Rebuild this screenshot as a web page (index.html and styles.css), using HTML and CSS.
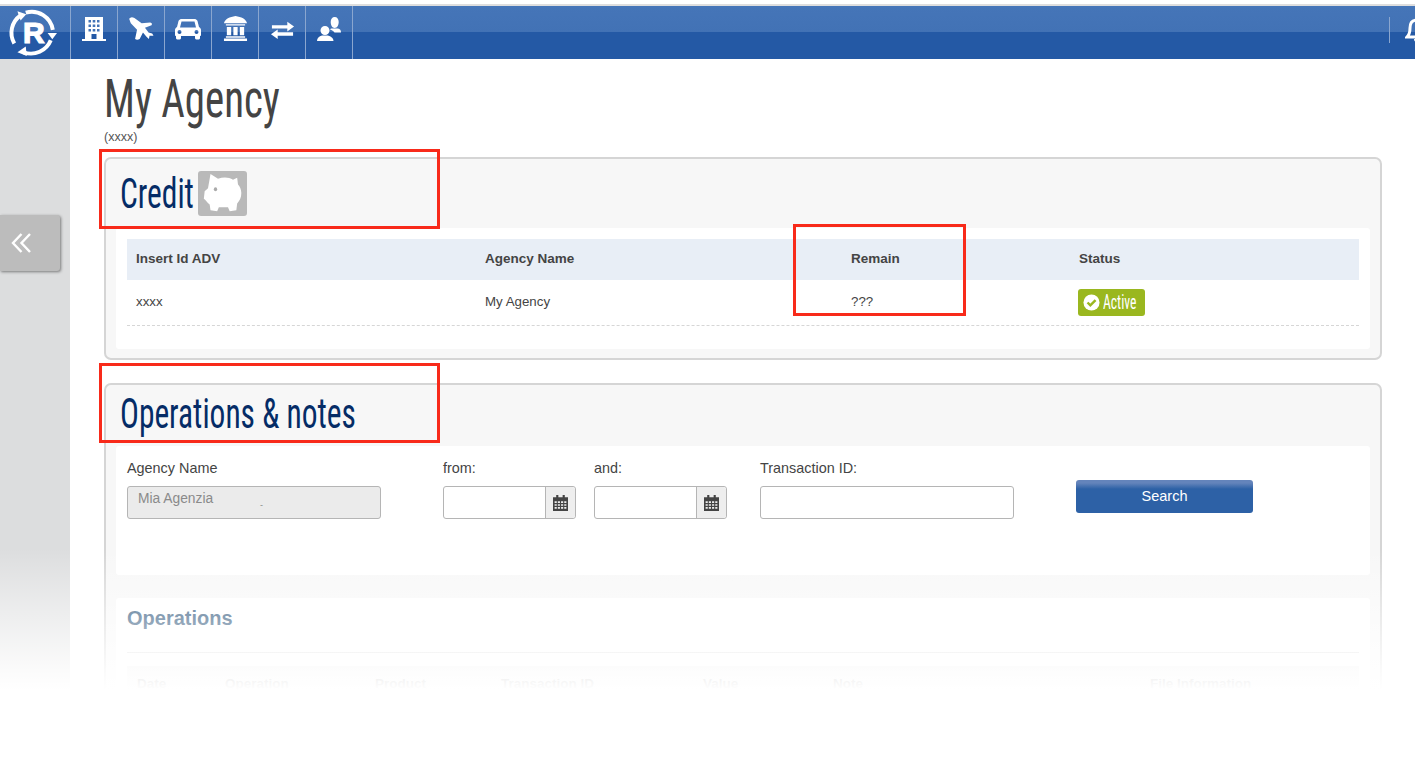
FILE: index.html
```html
<!DOCTYPE html>
<html lang="en">
<head>
<meta charset="utf-8">
<title>My Agency</title>
<link rel="stylesheet" href="styles.css">
</head>
<body>
<div class="page">
  <header class="topbar">
    <div class="logo">
      <svg class="logo-ring" viewBox="0 0 48 48" width="50" height="50">
        <g fill="none" stroke="#fff" stroke-width="3.800">
          <path d="M7 34A20.500 20.500 0 0 1 13 7"/>
          <path d="M18 4.500A20.500 20.500 0 0 1 44 21"/>
          <path d="M42 31A20.500 20.500 0 0 1 16 42.500"/>
        </g>
        <g fill="#fff">
          <path d="M10 3l8.500 3-5.500 6z"/>
          <path d="M39 24h9l-4.500 6z"/>
          <path d="M18 37l1 9-9-3.500z"/>
        </g>
      </svg>
      <span class="logo-r">R</span>
    </div>
    <nav class="nav">
      <a class="nav-item"><svg viewBox="0 0 24 24" width="24" height="24"><path fill="#fff" fill-rule="evenodd" d="M3 0h18v22h3v2H0v-2h3zM6.500 3v2.500h2.500V3zm4.200 0v2.500h2.600V3zm4.300 0v2.500h2.500V3zM6.500 7.500V10h2.500V7.500zm4.200 0V10h2.600V7.500zm4.300 0V10h2.500V7.500zM6.500 12v2.500h2.500V12zm4.200 0v2.500h2.600V12zm4.300 0v2.500h2.500V12zM9.500 17v5h5v-5z"/></svg></a>
      <a class="nav-item"><svg viewBox="385 50 78 76" width="26" height="25"><path fill="#fff" d="M388 58Q394 50 404 56L426 72 452 70Q460 72 456 78L436 86 447 100 458 103 462 110 450 110 448 120 440 112 430 100 420 120Q412 124 406 120L412 92 393 72Z"/></svg></a>
      <a class="nav-item"><svg viewBox="0 0 26 24" width="26" height="24"><path fill="#fff" fill-rule="evenodd" d="M6 2h14c1 0 2 1 2.500 2L24 10c1 .5 2 1.500 2 3v5c0 1-1 1-1 1v2c0 1-1 1.500-2 1.500h-1c-1 0-2-.5-2-1.500v-2H6v2c0 1-1 1.500-2 1.500H3c-1 0-2-.5-2-1.500v-2s-1 0-1-1v-5c0-1.500 1-2.500 2-3l1.500-6C4 3 5 2 6 2zm.5 2.500L5 10.500h16l-1.500-6zM4.500 13a2 2 0 1 0 0 4 2 2 0 0 0 0-4zm17 0a2 2 0 1 0 0 4 2 2 0 0 0 0-4z"/></svg></a>
      <a class="nav-item"><svg viewBox="0 0 26 26" width="25" height="25"><path fill="#fff" d="M13 0C19 1 24 3 25 7.500H1C2 3 7 1 13 0zM3 8.500h20v1.500H3zM4 11.500h4.500v8.500H4zM10.800 11.500h4.400v8.500h-4.400zM17.500 11.500H22v8.500h-4.500zM3 21h20v1.500H3zM1 23.500h24v2.500H1z"/></svg></a>
      <a class="nav-item"><svg viewBox="0 -6 26 28" width="25" height="27"><path fill="#fff" d="M18 1l7 5-7 5V8H2V4.500h16zM8 9v3h16v3.500H8V19l-7-5z"/></svg></a>
      <a class="nav-item"><svg viewBox="0 0 24 24" width="24" height="24"><g fill="#fff"><path d="M8 9c2.500 0 4.500 2 4.500 4.500S10.500 18 8 18s-4.500-2-4.500-4.500S5.500 9 8 9zM0 24c0-3 2-4.500 5-5.500h6c3 1 5.500 2.500 5.500 5.500z"/><path d="M17.700 0c2.500 0 4 2 4 5s-1.500 6-4 6-4-3-4-6 1.500-5 4-5zM14 11.500h7c2 .5 3 1.500 3 4h-6.500c-1-1.500-2.500-2.500-4.500-3z"/></g></svg></a>
    </nav>
    <div class="topbar-right">
      <span class="top-sep"></span>
      <svg class="bell" viewBox="0 0 24 26" width="24" height="26"><path fill="none" stroke="#fff" stroke-width="3" d="M12 3c5 0 7 3 7 8 0 5 1 7 3 9H2c2-2 3-4 3-9 0-5 2-8 7-8z"/><path fill="#fff" d="M9 22h6c0 2-1 3-3 3s-3-1-3-3zM10.500 0h3v3h-3z"/></svg>
    </div>
  </header>

  <div class="body">
    <aside class="sidebar">
      <button class="collapse" type="button" aria-label="Collapse"><svg viewBox="0 0 20 20" width="20" height="20"><path fill="none" stroke="#fff" stroke-width="2.400" d="M10.500 1L2 10l8.500 9M19 1l-8.500 9 8.500 9"/></svg></button>
    </aside>
    <main class="main">
      <h1 class="title"><span class="narrow">My Agency</span></h1>
      <p class="subtitle">(xxxx)</p>

      <section class="panel panel-credit">
        <h2 class="panel-title"><span class="narrow narrow-credit">Credit</span>
          <span class="piggy">
            <svg viewBox="0 0 48 44" width="40" height="42" preserveAspectRatio="none"><path fill="#fff" d="M9 1l9 5c6-2 13-2 18 1l5-2 1 7c2 2 4 5 4 9 0 5-2 8-5 11l-1 7-8 1-2-4H19l-2 4-8-1-1-6c-3-2-5-5-7-6l1-8 4-3z"/><circle cx="15" cy="17" r="2" fill="#aaa"/></svg>
          </span>
        </h2>
        <div class="card">
          <div class="credit-table">
            <div class="credit-row credit-head">
              <span>Insert Id ADV</span><span>Agency Name</span><span>Remain</span><span>Status</span>
            </div>
            <div class="credit-row credit-data">
              <span>xxxx</span><span>My Agency</span><span>???</span>
              <span><span class="badge"><svg viewBox="0 0 18 18" width="17" height="17"><circle cx="9" cy="9" r="8.500" fill="#fff"/><path fill="none" stroke="#9ab71f" stroke-width="2.600" d="M4.800 9l3 3 5.500-5.500"/></svg><span class="badge-text">Active</span></span></span>
            </div>
          </div>
        </div>
      </section>

      <section class="panel panel-ops">
        <h2 class="panel-title"><span class="narrow">Operations &amp; notes</span></h2>
        <div class="card card-form">
          <div class="field field-agency">
            <label class="label">Agency Name</label>
            <div class="input input-disabled">Mia Agenzia<span class="tick">-</span></div>
          </div>
          <div class="field field-date">
            <label class="label">from:</label>
            <div class="input input-date"><span class="date-box"></span><span class="addon"><svg viewBox="0 0 14 14" width="15" height="16" preserveAspectRatio="none"><path fill="#444" fill-rule="evenodd" d="M3 0h2v2h4V0h2v2h3v12H0V2h3zM1.500 5.500v1.500h2V5.500zm3 0v1.500h2V5.500zm3 0v1.500h2V5.500zm3 0v1.500h2V5.500zm-9 2.500v1.500h2V8zm3 0v1.500h2V8zm3 0v1.500h2V8zm3 0v1.500h2V8zm-9 2.500V12h2v-1.500zm3 0V12h2v-1.500zm3 0V12h2v-1.500zm3 0V12h2v-1.500z"/></svg></span></div>
          </div>
          <div class="field field-date field-and">
            <label class="label">and:</label>
            <div class="input input-date"><span class="date-box"></span><span class="addon"><svg viewBox="0 0 14 14" width="15" height="16" preserveAspectRatio="none"><path fill="#444" fill-rule="evenodd" d="M3 0h2v2h4V0h2v2h3v12H0V2h3zM1.500 5.500v1.500h2V5.500zm3 0v1.500h2V5.500zm3 0v1.500h2V5.500zm3 0v1.500h2V5.500zm-9 2.500v1.500h2V8zm3 0v1.500h2V8zm3 0v1.500h2V8zm3 0v1.500h2V8zm-9 2.500V12h2v-1.500zm3 0V12h2v-1.500zm3 0V12h2v-1.500zm3 0V12h2v-1.500z"/></svg></span></div>
          </div>
          <div class="field field-trans">
            <label class="label">Transaction ID:</label>
            <div class="input"></div>
          </div>
          <button class="search" type="button">Search</button>
        </div>
        <div class="card card-list">
          <h3 class="list-title">Operations</h3>
          <div class="list-rule"></div>
          <div class="list-head">
            <span class="c-date">Date</span><span class="c-op">Operation</span><span class="c-prod">Product</span><span class="c-trans">Transaction ID</span><span class="c-val">Value</span><span class="c-note">Note</span><span class="c-file">File Information</span>
          </div>
        </div>
      </section>
    </main>
  </div>

  <div class="fade"></div>
  <div class="mark mark-credit"></div>
  <div class="mark mark-remain"></div>
  <div class="mark mark-ops"></div>
</div>
</body>
</html>
```
FILE: styles.css
```css
* { box-sizing: border-box; }
html, body { margin: 0; padding: 0; background: #fff; }
body { font-family: "Liberation Sans", Arial, sans-serif; color: #444; overflow: hidden; }
.page { position: relative; width: 1415px; height: 778px; overflow: hidden; padding-top: 4px; }

.topbar { height: 55px; border-top: 2px solid #dedede; display: flex; align-items: stretch; background: linear-gradient(#4575b8 0, #4272b5 26px, #2459a5 26px, #2459a5 100%); }
.logo { position: relative; width: 70px; flex: none; display: flex; align-items: center; justify-content: center; }
.logo-ring { display: block; margin-right: 6px; }
.logo-r { position: absolute; left: 23px; top: 11px; font: 700 30px/32px "Liberation Sans", Arial, sans-serif; color: #fff; -webkit-text-stroke: 1.200px #fff; }
.nav { display: flex; }
.nav-item { width: 47px; border-left: 1px solid #8aa6cf; display: flex; align-items: center; justify-content: center; padding-bottom: 8px; }
.nav-item:last-child { border-right: 1px solid #8aa6cf; width: 48px; }
.nav-item svg { display: block; }
.topbar-right { margin-left: auto; display: flex; align-items: center; width: 26px; flex: none; overflow: hidden; padding-bottom: 5px; }
.top-sep { width: 1px; height: 26px; background: #8aa6cf; flex: none; margin-right: 15px; }
.bell { flex: none; }

.body { display: flex; height: 719px; }
.sidebar { width: 70px; flex: none; background: #dcddde; padding-top: 156px; }
.collapse { display: flex; align-items: center; width: 60px; height: 56px; padding: 0 0 0 11px; border: 0; border-radius: 0 3px 3px 0; background: #bcbcbc; box-shadow: 1px 1px 3px rgba(0,0,0,.45); }

.main { flex: 1; padding-left: 34px; padding-right: 33px; min-width: 0; }
.narrow { display: inline-block; white-space: nowrap; transform: scaleX(.748); transform-origin: 0 50%; }
.title { margin: 0; padding-top: 10px; height: 60px; font: 400 54px/60px "Roboto Condensed", "Liberation Sans Narrow", "Liberation Sans", sans-serif; color: #444; }
.title .narrow { transform: scaleX(.757); }
.subtitle { margin: 12px 0 0; font-size: 12.500px; line-height: 13px; color: #555; height: 13px; }

.panel { border: 2px solid #d5d5d5; border-radius: 7px; background: #f7f7f7; padding: 0 10px; }
.panel-credit { margin-top: 13px; height: 203px; }
.panel-ops { margin-top: 23px; height: 330px; }
.panel-title { margin: 0; height: 69px; padding-left: 4px; display: flex; align-items: center; gap: 4px; font: 400 42px/48px "Roboto Condensed", "Liberation Sans Narrow", "Liberation Sans", sans-serif; color: #052c66; }
.panel-ops .panel-title { height: 61px; padding-bottom: 3px; }
.narrow-credit { width: 74px; }
.piggy { width: 49px; height: 45px; background: #b9b9b9; border-radius: 3px; display: flex; align-items: center; justify-content: center; }

.card { background: #fff; border-radius: 3px; }
.panel-credit .card { height: 121px; padding: 11px 11px 0; }
.credit-row { display: grid; grid-template-columns: 349px 366px 228px 1fr; }
.credit-row > span { padding-left: 9px; }
.credit-head { height: 41px; background: #e8eef6; align-items: center; font-size: 13.500px; font-weight: 700; color: #444; padding-bottom: 2px; }
.credit-data { height: 46px; border-bottom: 1px dashed #d6d6d6; align-items: center; font-size: 13.300px; color: #444; padding-bottom: 3px; }
.credit-data > span:last-child { padding-left: 8px; padding-top: 3px; }
.badge { display: inline-flex; align-items: center; gap: 3px; width: 67px; height: 27px; padding: 0 0 0 5px; border-radius: 3px; background: #9ab71f; color: #fff; font: 400 20px/27px "Roboto Condensed", "Liberation Sans Narrow", "Liberation Sans", sans-serif; vertical-align: middle; overflow: hidden; }
.badge svg { flex: none; }
.badge-text { flex: none; display: inline-block; transform: scaleX(.68); transform-origin: 0 50%; }

.card-form { position: relative; height: 129px; display: flex; padding: 14px 0 0 11px; }
.field { display: flex; flex-direction: column; }
.label { height: 26px; font-size: 14.400px; line-height: 17px; color: #444; }
.input { height: 33px; border: 1px solid #b5b5b5; border-radius: 3px; background: #fff; }
.field-agency { width: 254px; margin-right: 62px; }
.input-disabled { background: #ebebeb; color: #8a8a8a; font-size: 13.800px; padding: 4px 0 0 10px; position: relative; line-height: 15px; }
.tick { position: absolute; left: 132px; top: 11px; font-size: 9px; }
.field-date { width: 133px; margin-right: 18px; }
.field-and { margin-right: 33px; }
.input-date { display: flex; }
.date-box { flex: 1; }
.addon { width: 30px; background: #eee; border-left: 1px solid #b5b5b5; display: flex; align-items: center; justify-content: center; border-radius: 0 3px 3px 0; }
.field-trans { width: 254px; margin-right: 62px; }
.search { width: 177px; height: 33px; margin-top: 20px; border: 0; border-radius: 3px; color: #fff; font: 400 14.500px/30px "Liberation Sans", Arial, sans-serif; background: linear-gradient(#6484bb 0, #6484bb 3px, #2d61a6 9px, #2d61a6 100%); padding: 0 0 2px; }

.card-list { margin-top: 23px; height: 130px; padding: 0 11px; }
.list-title { margin: 0; padding-top: 8px; height: 54px; font-size: 20px; line-height: 24px; font-weight: 700; color: #0a3a66; }
.list-rule { height: 1px; background: #d8d8d8; }
.list-head { position: relative; margin-top: 13px; height: 41px; background: #ececec; font-size: 13.500px; font-weight: 700; color: #444; }
.list-head span { position: absolute; top: 10px; line-height: 15px; }
.c-date { left: 10px; }
.c-op { left: 98px; }
.c-prod { left: 248px; }
.c-trans { left: 374px; }
.c-val { left: 576px; }
.c-note { left: 706px; }
.c-file { left: 1023px; }

.fade { position: absolute; left: 0; right: 0; top: 548px; bottom: 0; background: linear-gradient(rgba(255,255,255,0) 0, rgba(255,255,255,.45) 60px, rgba(255,255,255,.9) 125px, #fff 142px, #fff 100%); }
.mark { position: absolute; border: 3px solid #f82a1a; }
.mark-credit { left: 99px; top: 149px; width: 341px; height: 80px; }
.mark-remain { left: 793px; top: 224px; width: 173px; height: 92px; }
.mark-ops { left: 99px; top: 363px; width: 341px; height: 80px; }
```
